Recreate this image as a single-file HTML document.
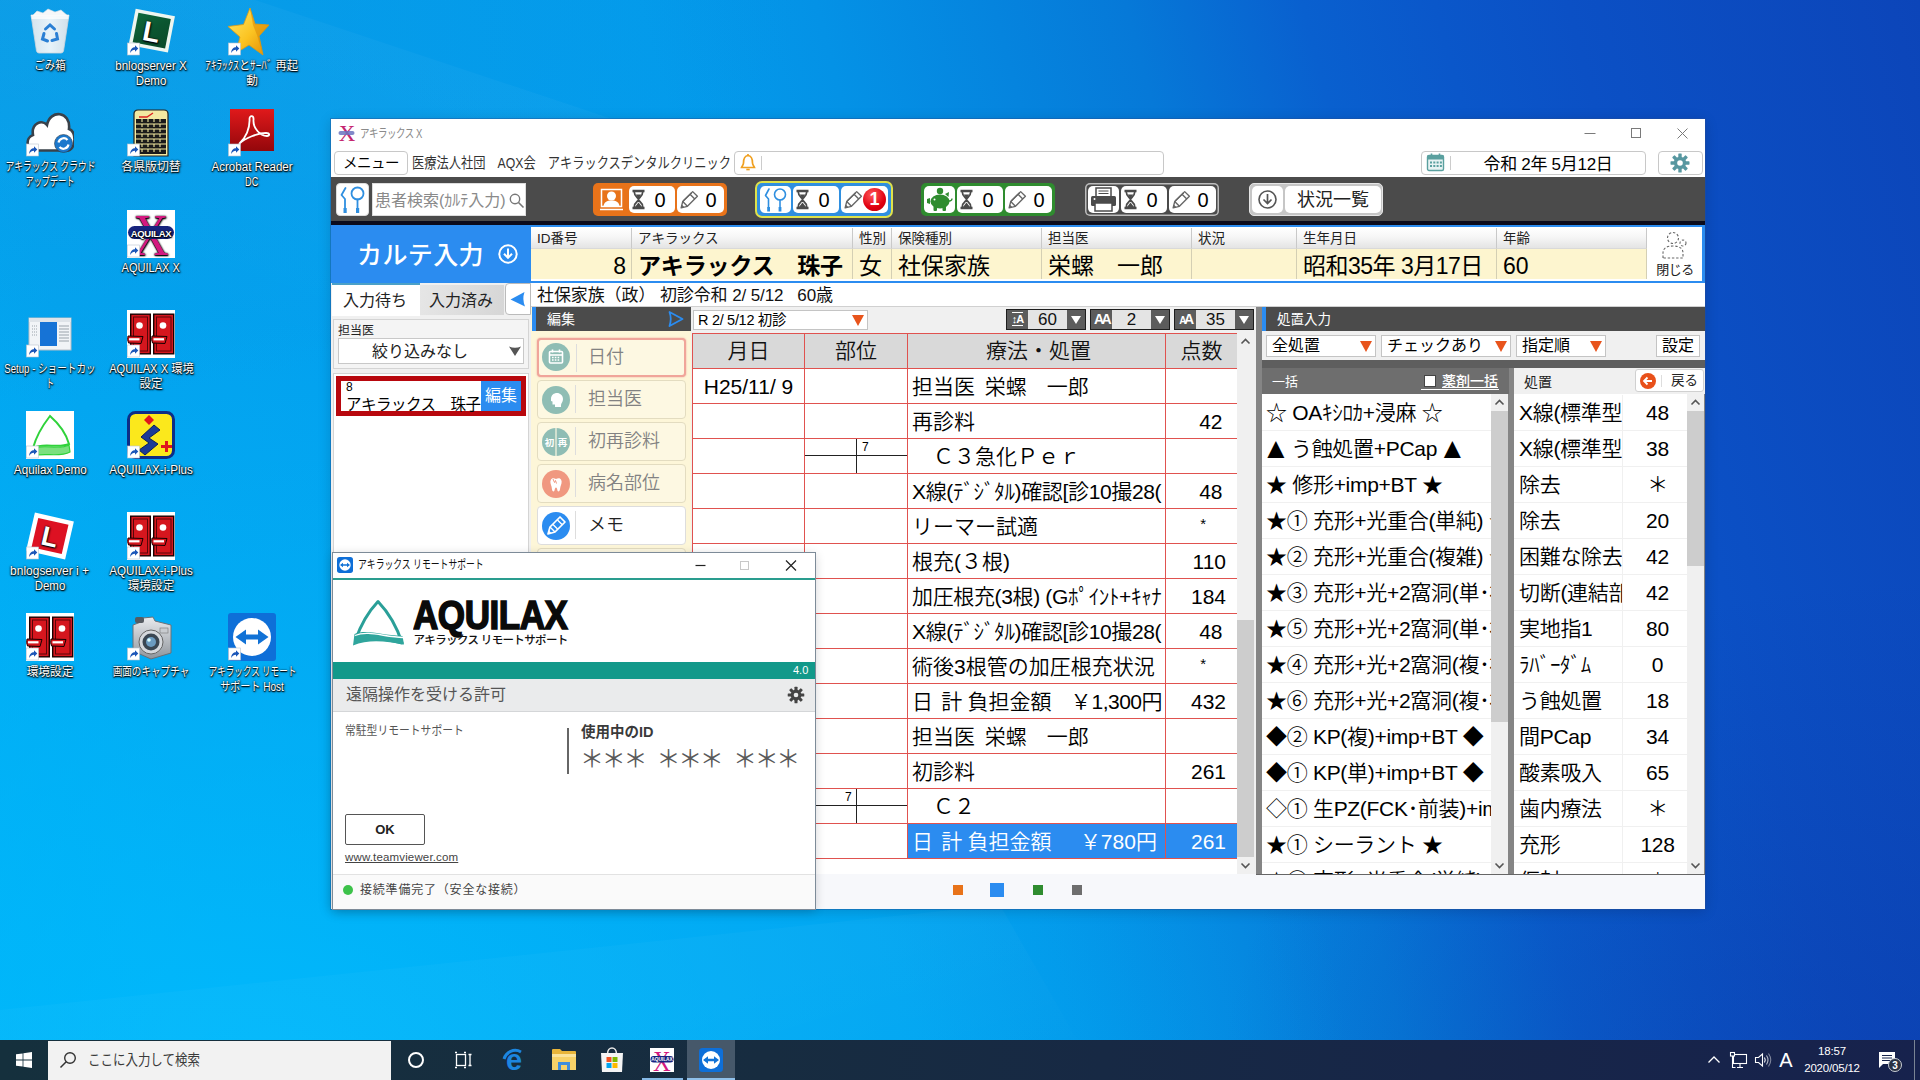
<!DOCTYPE html>
<html lang="ja"><head><meta charset="utf-8"><title>アキラックス X</title>
<style>
*{box-sizing:border-box;margin:0;padding:0}
html,body{width:1920px;height:1080px;overflow:hidden}
body{position:relative;font-family:"Liberation Sans","Noto Sans CJK JP",sans-serif;font-size:14px;color:#000;
background:#0a78d8}
.abs{position:absolute}
.bg{position:absolute;left:0;top:0;width:1920px;height:1080px;
background:linear-gradient(75deg,#00acf3 0%,#03a4ef 12%,#03a0ee 26%,#039cec 42%,#0492e6 50%,#0584de 58%,#0679d8 64%,#0960cf 72%,#0a57ca 78%,#0b50c5 84%,#0c45b9 100%)}
.bg2{position:absolute;left:0;top:0;width:1920px;height:1080px;
background:
 radial-gradient(ellipse 1100px 760px at 250px 1080px,rgba(0,190,255,.8),rgba(0,186,252,.45) 50%,rgba(0,182,250,0) 100%),
 radial-gradient(ellipse 700px 500px at 1920px 1080px,rgba(12,52,160,.45),rgba(12,52,160,0) 100%),
 radial-gradient(ellipse 800px 400px at 0px 0px,rgba(16,140,215,.35),rgba(16,140,215,0) 100%)}
/* desktop icons */
.dicon{position:absolute;width:160px;text-align:center;color:#fff;font-size:12px;line-height:15px;
text-shadow:0 0 2px #000,1px 1px 2px rgba(0,0,0,.9),0 1px 1px rgba(0,0,0,.8)}
.dicon svg{display:block;margin:0 auto 3px auto}
.dicon .lb{display:block;white-space:nowrap;height:15px}
.dicon .nw{display:inline-block;white-space:nowrap;transform-origin:50% 50%}
.dicon{overflow:visible}
</style>
<style>
/* main window */
#mw{position:absolute;left:331px;top:119px;width:1374px;height:790px;background:#fff;box-shadow:0 0 0 1px rgba(40,80,150,.4),0 2px 12px rgba(0,0,20,.18)}
.t{position:absolute;white-space:nowrap;line-height:1}
.nar{display:inline-block;transform-origin:0 50%;white-space:nowrap}
.btn{position:absolute;background:#fff;border:1px solid #c8c8c8;border-radius:4px}
.tbgrp{position:absolute;top:183px;height:33px;width:134px;border-radius:5px}
.tbgrp i{position:absolute;top:3px;height:27px;background:#fff;border-radius:5px;display:block}
.tbgrp b{position:absolute;top:4px;font-weight:normal;font-size:20px;line-height:27px;color:#000;width:20px;text-align:center}
.hl{position:absolute;top:228px;height:20px;background:linear-gradient(#fff,#f6f6f6 45%,#e4e4e4);border-right:1px solid #c9c9c9;font-size:13.500px;line-height:21px;padding-left:6px;color:#222;white-space:nowrap;overflow:hidden}
.hv{position:absolute;top:248px;height:31px;background:#fdf5cf;border-right:1px solid #d4cfb4;border-top:1px solid #d9d9d9;font-size:23px;line-height:35px;padding-left:6px;white-space:nowrap;overflow:hidden}
.dd{position:absolute;background:#fff;border:1px solid #c4c4c4;font-size:16px;white-space:nowrap}
.dd:after{content:"";position:absolute;right:3px;top:50%;margin-top:-5px;border-left:6px solid transparent;border-right:6px solid transparent;border-top:11px solid #e8541c}
.ebtn{position:absolute;left:537px;width:149px;height:39px;border:1px solid #e3dcc0;border-radius:4px;background:#fdf8e2;font-size:18px;font-weight:350;line-height:37px;color:#828282;padding-left:50px;white-space:nowrap}
.ebtn:before{content:"";position:absolute;left:37px;top:4px;height:28px;border-left:1px solid #ddd}
.ebtn svg{position:absolute;left:4px;top:4.500px}
/* chart table */
.ct{position:absolute;left:692px;top:332.500px;width:545px;height:526px;background:#fff}
.ct .r{position:absolute;left:0;width:545px;height:36px;border-top:1.500px solid #e0524f}
.ct .c{position:absolute;top:0;height:100%;border-left:1.500px solid #e0524f;font-size:21px;font-weight:350;line-height:35px;white-space:pre;overflow:hidden}
.ct .hd .c{background:#d9d9d9;text-align:center;font-size:21px;line-height:34px;color:#111}
.ct .c1{left:0;width:112px;text-align:center}.ct .c2{left:112px;width:103px}.ct .c3{left:215px;width:258px;padding-left:4px}.ct .c4{left:473px;width:72px;text-align:right;padding-right:11px}
.ct .sel .c3,.ct .sel .c4{background:#2b8cf0;color:#fff}
.sb{position:absolute;background:#f0f0f0}
.sb .th{position:absolute;left:0;width:100%;background:#cdcdcd}
.sb svg{position:absolute;left:0}
/* right lists */
.ll{position:absolute;font-size:21px;font-weight:350;line-height:35px;letter-spacing:-.3px;height:36px;white-space:nowrap;overflow:hidden;border-bottom:1px solid #f0f0f0;background:#fff}
.fs{position:absolute;top:309px;height:21px;width:80px;background:#5c5c5c;border:1px solid #1e1e1e}
.fs i{position:absolute;left:21px;top:0;width:39px;height:19px;background:#e4e4e4;font-style:normal;font-size:17px;font-weight:350;line-height:20px;text-align:center;color:#111}
.fs:after{content:"";position:absolute;right:4px;top:6px;border-left:5px solid transparent;border-right:5px solid transparent;border-top:8px solid #fff}
.fs b{position:absolute;left:0;top:0;width:21px;text-align:center;color:#fff;font-size:14px;line-height:19px;letter-spacing:-2.500px;font-weight:bold}
.fs b small{font-size:10px}
.tri{font-size:29px;line-height:0;position:relative;top:2px;margin:0 -4.500px}
</style>
</head><body>
<div class="bg"></div><div class="bg2"></div>
<svg class="abs" style="left:0;top:0" width="1920" height="1080" viewBox="0 0 1920 1080"><defs><linearGradient id="ray1" gradientUnits="userSpaceOnUse" x1="600" y1="115" x2="500" y2="415"><stop offset="0" stop-color="#fff" stop-opacity=".03"/><stop offset="1" stop-color="#fff" stop-opacity="0"/></linearGradient><linearGradient id="ray2" gradientUnits="userSpaceOnUse" x1="700" y1="1000" x2="760" y2="1180"><stop offset="0" stop-color="#fff" stop-opacity=".025"/><stop offset="1" stop-color="#fff" stop-opacity="0"/></linearGradient></defs><path d="M0 0 L255 0 L1100 281.700 L1100 700 L0 700Z" fill="url(#ray1)"/><path d="M0 1080 L0 1010 L1000 905 L1100 1080Z" fill="url(#ray2)"/></svg>
<!-- desktop icons -->
<div class="dicon" style="left:-30px;top:8px"><svg width="48" height="48" viewBox="0 0 48 48" style="margin-bottom:3px"><defs><linearGradient id="bg11" x1="0" y1="0" x2="1" y2="0"><stop offset="0" stop-color="#e4e9ee"/><stop offset=".5" stop-color="#f7f9fb"/><stop offset="1" stop-color="#dfe5ea"/></linearGradient></defs>
<path d="M5 7 L43 7 L37.500 43 Q37 45 35 45 L13 45 Q11 45 10.500 43 Z" fill="url(#bg11)" fill-opacity=".93" stroke="#cfd6dc" stroke-width=".8"/>
<path d="M6 8 l5 -5 l6 2 l5 -4 l7 3 l6 -2 l7 6 z" fill="#f5f7f9" stroke="#d8dee3" stroke-width=".6"/>
<path d="M5 7 L43 7 L42.300 11 L5.700 11Z" fill="#fff" fill-opacity=".7"/>
<g fill="none" stroke="#2a7fd4" stroke-width="3" stroke-linecap="round"><path d="M19.500 21 l4.500 -4 l4.500 4"/><path d="M30.500 25.500 l1 5.500 l-5.500 1.500"/><path d="M21.500 33 l-5 -2 l1.500 -5.500"/></g></svg><span class="lb"><span class="nw" style="transform:scaleX(0.872)">ごみ箱</span></span></div>
<div class="dicon" style="left:71px;top:8px"><svg width="48" height="48" viewBox="0 0 48 48" style="margin-bottom:3px"><defs><linearGradient id="lg12" x1="0" y1="0" x2="1" y2="1"><stop offset="0" stop-color="#0f6a3c"/><stop offset=".5" stop-color="#0b5530"/><stop offset="1" stop-color="#0a4a2a"/></linearGradient></defs>
<g transform="rotate(11 24 24)"><rect x="4.500" y="4" width="40" height="37" fill="#eef6f0"/><rect x="8" y="7.500" width="33" height="30" fill="url(#lg12)"/>
<text x="24.500" y="33.500" font-family="Liberation Sans,sans-serif" font-weight="bold" font-size="28" fill="#fff" text-anchor="middle">L</text></g><g><rect x=".5" y="35" width="12" height="12" fill="#fff" stroke="#b8c4d0" stroke-width=".6"/><path d="M3.200 45 C3.200 41 5.500 39.200 8 39.200 L8 37.300 L11.300 40.500 L8 43.700 L8 41.800 C5.800 41.800 4.500 42.800 3.200 45Z" fill="#1b56b8"/></g></svg><span class="lb"><span class="nw" style="transform:scaleX(0.968)">bnlogserver X</span></span><span class="lb"><span class="nw" style="transform:scaleX(0.959)">Demo</span></span></div>
<div class="dicon" style="left:172px;top:8px"><svg width="48" height="48" viewBox="0 0 48 48" style="margin-bottom:3px"><defs><linearGradient id="sg3" x1="0" y1="0" x2="1" y2="1"><stop offset="0" stop-color="#ffe96a"/><stop offset=".55" stop-color="#fbc321"/><stop offset="1" stop-color="#e08a06"/></linearGradient></defs>
<path d="M22 0 L27 16 L41 17 L31 28 L35 47 L21 37 L8 45 L12 29 L0 18.500 L15.500 16.500 Z" fill="url(#sg3)" stroke="#e09a10" stroke-width=".8"/>
<path d="M22 0 L27 16 L41 17 L31 28 L35 47 L29 27 L25 17Z" fill="#d98a08" fill-opacity=".55"/><g><rect x=".5" y="35" width="12" height="12" fill="#fff" stroke="#b8c4d0" stroke-width=".6"/><path d="M3.200 45 C3.200 41 5.500 39.200 8 39.200 L8 37.300 L11.300 40.500 L8 43.700 L8 41.800 C5.800 41.800 4.500 42.800 3.200 45Z" fill="#1b56b8"/></g></svg><span class="lb"><span class="nw" style="transform:scaleX(0.933)">ｱｷﾗｯｸｽとｻｰﾊﾞ 再起</span></span><span class="lb"><span class="nw" style="transform:scaleX(0.974)">動</span></span></div>
<div class="dicon" style="left:-30px;top:109px"><svg width="48" height="48" viewBox="0 0 48 48" style="margin-bottom:3px"><path d="M10 41.500 C0 41.500 -1 29 7 26 C5 14.500 16 10 21 16 C24 0 45 2 43 20 C51 22 50 41.500 41 41.500 Z" fill="#fff" stroke="#39414a" stroke-width="2.600"/>
<circle cx="37.500" cy="34.500" r="9" fill="#1c78cc" stroke="#2a3a4a" stroke-width=".6"/><path d="M32.500 33.500 a5.200 5.200 0 0 1 9 -2.500 M42.500 35.500 a5.200 5.200 0 0 1 -9 2.500" fill="none" stroke="#fff" stroke-width="2.200"/><g><rect x=".5" y="35" width="12" height="12" fill="#fff" stroke="#b8c4d0" stroke-width=".6"/><path d="M3.200 45 C3.200 41 5.500 39.200 8 39.200 L8 37.300 L11.300 40.500 L8 43.700 L8 41.800 C5.800 41.800 4.500 42.800 3.200 45Z" fill="#1b56b8"/></g></svg><span class="lb"><span class="nw" style="transform:scaleX(0.732)">アキラックス クラウド</span></span><span class="lb"><span class="nw" style="transform:scaleX(0.680)">アップデート</span></span></div>
<div class="dicon" style="left:71px;top:109px"><svg width="48" height="48" viewBox="0 0 48 48" style="margin-bottom:3px"><path d="M7 5 Q7 1 11 1 L37 1 Q41 1 41 5 L41 47 L7 47Z" fill="#f3e9a2" stroke="#222" stroke-width="1.2"/>
<rect x="9" y="10" width="30" height="35" fill="#1a1a1a"/>
<g stroke="#f3e9a2" stroke-width="1.1"><path d="M9 15h30M9 20h30M9 25h30M9 30h30M9 35h30M9 40h30"/><path d="M15 10v35M21 10v35M27 10v35M33 10v35" stroke-dasharray="3 2"/></g>
<path d="M12 8 L20 8 L26 4" stroke="#d22" stroke-width="1.4" fill="none"/><g><rect x=".5" y="35" width="12" height="12" fill="#fff" stroke="#b8c4d0" stroke-width=".6"/><path d="M3.200 45 C3.200 41 5.500 39.200 8 39.200 L8 37.300 L11.300 40.500 L8 43.700 L8 41.800 C5.800 41.800 4.500 42.800 3.200 45Z" fill="#1b56b8"/></g></svg><span class="lb"><span class="nw" style="transform:scaleX(0.988)">各県版切替</span></span></div>
<div class="dicon" style="left:172px;top:109px"><svg width="48" height="48" viewBox="0 0 48 48" style="margin-bottom:3px"><defs><linearGradient id="ag6" x1="0" y1="0" x2="0" y2="1"><stop offset="0" stop-color="#e0191b"/><stop offset="1" stop-color="#93070b"/></linearGradient></defs>
<rect x="2" y="0" width="44" height="42" fill="url(#ag6)"/>
<path transform="translate(0 -3)" d="M11 38 C18 32 22 22 21.500 13 C21.500 9 26 9 25.500 14 C25 22 32 30 39 30 C42 30 42 27 38 27 C30 27 17 32 11 38Z" fill="none" stroke="#fff" stroke-width="1.8"/><g><rect x=".5" y="35" width="12" height="12" fill="#fff" stroke="#b8c4d0" stroke-width=".6"/><path d="M3.200 45 C3.200 41 5.500 39.200 8 39.200 L8 37.300 L11.300 40.500 L8 43.700 L8 41.800 C5.800 41.800 4.500 42.800 3.200 45Z" fill="#1b56b8"/></g></svg><span class="lb"><span class="nw" style="transform:scaleX(0.967)">Acrobat Reader</span></span><span class="lb"><span class="nw" style="transform:scaleX(0.767)">DC</span></span></div>
<div class="dicon" style="left:71px;top:210px"><svg width="48" height="48" viewBox="0 0 48 48" style="margin-bottom:3px"><rect x="0" y="0" width="48" height="48" fill="#fff"/>
<text x="24" y="45" font-family="Liberation Serif,serif" font-size="60" fill="#d3197f" text-anchor="middle" transform="translate(24 0) scale(.82 1) translate(-24 0)">X</text>
<rect x="1" y="16" width="46" height="13" rx="6.500" fill="#17247e"/>
<text x="24" y="26.500" font-family="Liberation Sans,sans-serif" font-weight="bold" font-size="9.500" fill="#fff" text-anchor="middle" letter-spacing="-.3">AQUILAX</text><g><rect x=".5" y="35" width="12" height="12" fill="#fff" stroke="#b8c4d0" stroke-width=".6"/><path d="M3.200 45 C3.200 41 5.500 39.200 8 39.200 L8 37.300 L11.300 40.500 L8 43.700 L8 41.800 C5.800 41.800 4.500 42.800 3.200 45Z" fill="#1b56b8"/></g></svg><span class="lb"><span class="nw" style="transform:scaleX(0.920)">AQUILAX X</span></span></div>
<div class="dicon" style="left:-30px;top:310px"><svg width="48" height="48" viewBox="0 0 48 48" style="margin-bottom:4px"><rect x="3" y="8" width="42" height="32" fill="#f1f4f7" stroke="#b6bec6" stroke-width="1"/>
<rect x="3" y="8" width="42" height="4" fill="#dfe4e9"/>
<rect x="14" y="12" width="17" height="24" fill="#1673d6"/>
<g stroke="#9aa3ab" stroke-width="1"><path d="M33 16h10M33 19h10M33 22h10M33 25h10M33 28h10M33 31h10"/><path d="M6 16h5M6 19h5M6 22h5M6 25h5" stroke-dasharray="1 1"/></g><g><rect x=".5" y="35" width="12" height="12" fill="#fff" stroke="#b8c4d0" stroke-width=".6"/><path d="M3.200 45 C3.200 41 5.500 39.200 8 39.200 L8 37.300 L11.300 40.500 L8 43.700 L8 41.800 C5.800 41.800 4.500 42.800 3.200 45Z" fill="#1b56b8"/></g></svg><span class="lb"><span class="nw" style="transform:scaleX(0.801)">Setup - ショートカッ</span></span><span class="lb"><span class="nw" style="transform:scaleX(0.666)">ト</span></span></div>
<div class="dicon" style="left:71px;top:310px"><svg width="48" height="48" viewBox="0 0 48 48" style="margin-bottom:4px"><rect x="0" y="0" width="48" height="48" fill="#fff"/>
<rect x="3.700" y="4.200" width="19.600" height="39.600" fill="#d5161e" stroke="#1a0000" stroke-width="1.400"/><rect x="26.700" y="4.200" width="20" height="39.600" fill="#d5161e" stroke="#1a0000" stroke-width="1.400"/>
<rect x="6.500" y="7" width="14" height="34" fill="none" stroke="#5a0508" stroke-width="1"/><rect x="29.500" y="7" width="14.500" height="34" fill="none" stroke="#5a0508" stroke-width="1"/>
<circle cx="12.500" cy="15.500" r="3.300" fill="#fff"/><circle cx="36" cy="15.500" r="3.300" fill="#fff"/>
<path d="M1 26 Q0 29.500 1.500 33 L14 33.500 L16 26.500 Z" fill="#d5161e" stroke="#1a0000" stroke-width="1"/><path d="M25 26 Q24 29.500 25.500 33 L38 33.500 L40 26.500 Z" fill="#d5161e" stroke="#1a0000" stroke-width="1"/>
<rect x="2" y="28.200" width="10.500" height="2.200" fill="#fff"/><rect x="26.500" y="28.200" width="10.500" height="2.200" fill="#fff"/><g><rect x=".5" y="35" width="12" height="12" fill="#fff" stroke="#b8c4d0" stroke-width=".6"/><path d="M3.200 45 C3.200 41 5.500 39.200 8 39.200 L8 37.300 L11.300 40.500 L8 43.700 L8 41.800 C5.800 41.800 4.500 42.800 3.200 45Z" fill="#1b56b8"/></g></svg><span class="lb"><span class="nw" style="transform:scaleX(0.931)">AQUILAX X 環境</span></span><span class="lb"><span class="nw" style="transform:scaleX(0.966)">設定</span></span></div>
<div class="dicon" style="left:-30px;top:411px"><svg width="48" height="48" viewBox="0 0 48 48" style="margin-bottom:4px"><rect x="0" y="0" width="48" height="48" fill="#fff"/>
<path d="M24 5 C17 14 10 26 7 37 C18 31 32 38 43 33 C40 22 32 12 24 5Z" fill="none" stroke="#2fd23a" stroke-width="2"/>
<path d="M6 38 C18 32 32 40 43 34 L44 41 C33 47 18 41 7 45Z" fill="#7be07f" stroke="#2fd23a" stroke-width="1.2"/><g><rect x=".5" y="35" width="12" height="12" fill="#fff" stroke="#b8c4d0" stroke-width=".6"/><path d="M3.200 45 C3.200 41 5.500 39.200 8 39.200 L8 37.300 L11.300 40.500 L8 43.700 L8 41.800 C5.800 41.800 4.500 42.800 3.200 45Z" fill="#1b56b8"/></g></svg><span class="lb"><span class="nw" style="transform:scaleX(0.977)">Aquilax Demo</span></span></div>
<div class="dicon" style="left:71px;top:411px"><svg width="48" height="48" viewBox="0 0 48 48" style="margin-bottom:4px"><rect x="1.5" y="1.500" width="45" height="45" rx="7" fill="#fbe81c" stroke="#0d2d86" stroke-width="3"/>
<path d="M27 14 L33 19 L22 27 L31 33 L18 44 L12 39 L22 32 L14 26Z" fill="#1b3a96" stroke="#0a1f5c" stroke-width="1"/>
<path d="M22 4 l5 5 l-5 5 l-5 -5z" fill="#e0161c"/>
<path d="M34 34h4v-4h3v4h4v3h-4v4h-3v-4h-4z" fill="#e0161c"/><g><rect x=".5" y="35" width="12" height="12" fill="#fff" stroke="#b8c4d0" stroke-width=".6"/><path d="M3.200 45 C3.200 41 5.500 39.200 8 39.200 L8 37.300 L11.300 40.500 L8 43.700 L8 41.800 C5.800 41.800 4.500 42.800 3.200 45Z" fill="#1b56b8"/></g></svg><span class="lb"><span class="nw" style="transform:scaleX(0.972)">AQUILAX-i-Plus</span></span></div>
<div class="dicon" style="left:-30px;top:512px"><svg width="48" height="48" viewBox="0 0 48 48" style="margin-bottom:4px"><g transform="rotate(13 24 24)"><rect x="4" y="4.500" width="40" height="39" fill="#fff"/><rect x="8.500" y="9" width="31" height="30" fill="#dd1122"/>
<text x="24" y="34" font-family="Liberation Sans,sans-serif" font-weight="bold" font-size="27" fill="#fff" text-anchor="middle">L</text></g><g><rect x=".5" y="35" width="12" height="12" fill="#fff" stroke="#b8c4d0" stroke-width=".6"/><path d="M3.200 45 C3.200 41 5.500 39.200 8 39.200 L8 37.300 L11.300 40.500 L8 43.700 L8 41.800 C5.800 41.800 4.500 42.800 3.200 45Z" fill="#1b56b8"/></g></svg><span class="lb"><span class="nw" style="transform:scaleX(0.998)">bnlogserver i +</span></span><span class="lb"><span class="nw" style="transform:scaleX(0.959)">Demo</span></span></div>
<div class="dicon" style="left:71px;top:512px"><svg width="48" height="48" viewBox="0 0 48 48" style="margin-bottom:4px"><rect x="0" y="0" width="48" height="48" fill="#fff"/>
<rect x="3.700" y="4.200" width="19.600" height="39.600" fill="#d5161e" stroke="#1a0000" stroke-width="1.400"/><rect x="26.700" y="4.200" width="20" height="39.600" fill="#d5161e" stroke="#1a0000" stroke-width="1.400"/>
<rect x="6.500" y="7" width="14" height="34" fill="none" stroke="#5a0508" stroke-width="1"/><rect x="29.500" y="7" width="14.500" height="34" fill="none" stroke="#5a0508" stroke-width="1"/>
<circle cx="12.500" cy="15.500" r="3.300" fill="#fff"/><circle cx="36" cy="15.500" r="3.300" fill="#fff"/>
<path d="M1 26 Q0 29.500 1.500 33 L14 33.500 L16 26.500 Z" fill="#d5161e" stroke="#1a0000" stroke-width="1"/><path d="M25 26 Q24 29.500 25.500 33 L38 33.500 L40 26.500 Z" fill="#d5161e" stroke="#1a0000" stroke-width="1"/>
<rect x="2" y="28.200" width="10.500" height="2.200" fill="#fff"/><rect x="26.500" y="28.200" width="10.500" height="2.200" fill="#fff"/><g><rect x=".5" y="35" width="12" height="12" fill="#fff" stroke="#b8c4d0" stroke-width=".6"/><path d="M3.200 45 C3.200 41 5.500 39.200 8 39.200 L8 37.300 L11.300 40.500 L8 43.700 L8 41.800 C5.800 41.800 4.500 42.800 3.200 45Z" fill="#1b56b8"/></g></svg><span class="lb"><span class="nw" style="transform:scaleX(0.972)">AQUILAX-i-Plus</span></span><span class="lb"><span class="nw" style="transform:scaleX(0.971)">環境設定</span></span></div>
<div class="dicon" style="left:-30px;top:613px"><svg width="48" height="48" viewBox="0 0 48 48" style="margin-bottom:4px"><rect x="0" y="0" width="48" height="48" fill="#fff"/>
<rect x="3.700" y="4.200" width="19.600" height="39.600" fill="#d5161e" stroke="#1a0000" stroke-width="1.400"/><rect x="26.700" y="4.200" width="20" height="39.600" fill="#d5161e" stroke="#1a0000" stroke-width="1.400"/>
<rect x="6.500" y="7" width="14" height="34" fill="none" stroke="#5a0508" stroke-width="1"/><rect x="29.500" y="7" width="14.500" height="34" fill="none" stroke="#5a0508" stroke-width="1"/>
<circle cx="12.500" cy="15.500" r="3.300" fill="#fff"/><circle cx="36" cy="15.500" r="3.300" fill="#fff"/>
<path d="M1 26 Q0 29.500 1.500 33 L14 33.500 L16 26.500 Z" fill="#d5161e" stroke="#1a0000" stroke-width="1"/><path d="M25 26 Q24 29.500 25.500 33 L38 33.500 L40 26.500 Z" fill="#d5161e" stroke="#1a0000" stroke-width="1"/>
<rect x="2" y="28.200" width="10.500" height="2.200" fill="#fff"/><rect x="26.500" y="28.200" width="10.500" height="2.200" fill="#fff"/><g><rect x=".5" y="35" width="12" height="12" fill="#fff" stroke="#b8c4d0" stroke-width=".6"/><path d="M3.200 45 C3.200 41 5.500 39.200 8 39.200 L8 37.300 L11.300 40.500 L8 43.700 L8 41.800 C5.800 41.800 4.500 42.800 3.200 45Z" fill="#1b56b8"/></g></svg><span class="lb"><span class="nw" style="transform:scaleX(0.971)">環境設定</span></span></div>
<div class="dicon" style="left:71px;top:613px"><svg width="48" height="48" viewBox="0 0 48 48" style="margin-bottom:4px"><defs><linearGradient id="cg15" x1="0" y1="0" x2="0" y2="1"><stop offset="0" stop-color="#e9ebee"/><stop offset="1" stop-color="#8f959c"/></linearGradient></defs>
<path d="M6 12 L14 9 L16 5 L26 4 L28 8 L44 12 L44 40 L24 46 L6 38Z" fill="url(#cg15)" stroke="#6a7076" stroke-width="1"/>
<rect x="8" y="4" width="9" height="6" rx="2" fill="#555b62"/>
<circle cx="24" cy="29" r="12" fill="#d5d8dc" stroke="#666" stroke-width="1"/><circle cx="24" cy="29" r="8.500" fill="#3a4652"/><circle cx="24" cy="29" r="5" fill="#6b9bc0"/><circle cx="22" cy="27" r="1.800" fill="#dff"/>
<rect x="33" y="15" width="8" height="5" fill="#c8ccd0" stroke="#777" stroke-width=".6"/><g><rect x=".5" y="35" width="12" height="12" fill="#fff" stroke="#b8c4d0" stroke-width=".6"/><path d="M3.200 45 C3.200 41 5.500 39.200 8 39.200 L8 37.300 L11.300 40.500 L8 43.700 L8 41.800 C5.800 41.800 4.500 42.800 3.200 45Z" fill="#1b56b8"/></g></svg><span class="lb"><span class="nw" style="transform:scaleX(0.799)">画面のキャプチャ</span></span></div>
<div class="dicon" style="left:172px;top:613px"><svg width="48" height="48" viewBox="0 0 48 48" style="margin-bottom:4px"><rect x="0" y="0" width="48" height="48" rx="3" fill="#0e6fd8"/>
<circle cx="24" cy="24" r="19" fill="#fff"/>
<path d="M7.500 24 L18 16.500 L18 21.500 L30 21.500 L30 16.500 L40.500 24 L30 31.500 L30 26.500 L18 26.500 L18 31.500Z" fill="#1172d6"/><g><rect x=".5" y="35" width="12" height="12" fill="#fff" stroke="#b8c4d0" stroke-width=".6"/><path d="M3.200 45 C3.200 41 5.500 39.200 8 39.200 L8 37.300 L11.300 40.500 L8 43.700 L8 41.800 C5.800 41.800 4.500 42.800 3.200 45Z" fill="#1b56b8"/></g></svg><span class="lb"><span class="nw" style="transform:scaleX(0.711)">アキラックス リモート</span></span><span class="lb"><span class="nw" style="transform:scaleX(0.838)">サポート Host</span></span></div>
<!-- main window -->
<div id="mw"></div>
<!-- title bar -->
<svg class="abs" style="left:337px;top:123px" width="20" height="20" viewBox="0 0 20 20"><text x="10" y="18" text-anchor="middle" font-family="Liberation Serif,serif" font-size="23" fill="#c4266f">X</text><rect x="1.500" y="8" width="16" height="4" rx="2" fill="#6b74c0" fill-opacity=".85"/></svg>
<div class="t" style="left:360px;top:128px;font-size:12px;color:#8a8a8a;letter-spacing:-.6px"><span class="nar" style="transform:scaleX(.79)">アキラックス X</span></div>
<svg class="abs" style="left:1570px;top:120px" width="134" height="30" viewBox="0 0 134 30"><g stroke="#7a7a7a" stroke-width="1" fill="none"><path d="M14.500 13.500h11"/><rect x="61.500" y="8.500" width="9" height="9"/><path d="M107.500 8.500l10 10M117.500 8.500l-10 10"/></g></svg>
<!-- menu row -->
<div class="btn" style="left:334px;top:151px;width:74px;height:24px;font-size:14.500px;line-height:22px;text-align:center;letter-spacing:-.5px">メニュー</div>
<div class="t" style="left:412px;top:155px;font-size:15px;color:#333"><span class="nar" style="transform:scaleX(.815)">医療法人社団　AQX会　アキラックスデンタルクリニック</span></div>
<div class="btn" style="left:734px;top:151px;width:430px;height:24px"></div>
<svg class="abs" style="left:738px;top:152px" width="26" height="22" viewBox="0 0 26 22"><path d="M10 3.500 C5.500 4 5.500 8.500 5.500 11 C5.500 13 4 14 3.500 15.500 L16.500 15.500 C16 14 14.500 13 14.500 11 C14.500 8.500 14.500 4 10 3.500Z" fill="none" stroke="#f0a020" stroke-width="1.700"/><path d="M8.300 17.500h3.400" stroke="#f0a020" stroke-width="1.700"/><path d="M10 3.500v-1.500" stroke="#f0a020" stroke-width="1.700"/><path d="M23.500 4v14" stroke="#ccc" stroke-width="1"/></svg>
<div class="btn" style="left:1421px;top:151px;width:225px;height:24px"></div>
<svg class="abs" style="left:1426px;top:152px" width="28" height="22" viewBox="0 0 28 22"><rect x="1.500" y="3.500" width="16" height="15" rx="1.500" fill="#e8f3f3" stroke="#5aa09f" stroke-width="1.400"/><rect x="1.500" y="3.500" width="16" height="4" fill="#5aa09f"/><path d="M5.500 1.500v3.500M13.500 1.500v3.500" stroke="#5aa09f" stroke-width="1.600"/><g fill="#5aa09f"><rect x="4" y="9.500" width="2" height="2"/><rect x="7.300" y="9.500" width="2" height="2"/><rect x="10.600" y="9.500" width="2" height="2"/><rect x="13.900" y="9.500" width="2" height="2"/><rect x="4" y="13" width="2" height="2"/><rect x="7.300" y="13" width="2" height="2"/><rect x="10.600" y="13" width="2" height="2"/><rect x="13.900" y="13" width="2" height="2"/></g><path d="M24.500 4v14" stroke="#ccc" stroke-width="1"/></svg>
<div class="t" style="left:1452px;top:155.500px;width:192px;text-align:center;font-size:17px;letter-spacing:-.3px">令和 2年 5月12日</div>
<div class="btn" style="left:1658px;top:151px;width:45px;height:24px"></div>
<svg class="abs" style="left:1670px;top:153px" width="20" height="20" viewBox="0 0 20 20"><g fill="#5797a0"><circle cx="10" cy="10" r="6.200"/><g id="gt"><rect x="8.300" y=".5" width="3.400" height="4" rx=".6"/><rect x="8.300" y="15.500" width="3.400" height="4" rx=".6"/></g><use href="#gt" transform="rotate(45 10 10)"/><use href="#gt" transform="rotate(90 10 10)"/><use href="#gt" transform="rotate(135 10 10)"/></g><circle cx="10" cy="10" r="2.800" fill="#fff"/></svg>
<!-- toolbar -->
<div class="abs" style="left:331px;top:177px;width:1374px;height:45px;background:#4b4b4b"></div>
<div class="abs" style="left:331px;top:221px;width:1374px;height:4px;background:#0b0b1c"></div>
<div class="abs" style="left:336px;top:183px;width:33px;height:33px;background:#fff;border-radius:4px;border:1px solid #ddd"></div>
<svg class="abs" style="left:337px;top:184px" width="31" height="31" viewBox="0 0 31 31"><g fill="none" stroke="#2f8fe0" stroke-width="1.800" stroke-linecap="round" stroke-linejoin="round"><path d="M8.500 4 L4.500 11 L8 15 L8 25"/><circle cx="20.500" cy="9.500" r="6"/><path d="M20.500 15.500V25"/></g><rect x="6.500" y="24" width="3.200" height="5" fill="#2f8fe0"/><rect x="19" y="24" width="3.200" height="5" fill="#2f8fe0"/></svg>
<div class="abs" style="left:372px;top:183px;width:154px;height:33px;background:#fff;border:1px solid #ddd"></div>
<div class="t" style="left:375px;top:192.500px;font-size:16px;color:#8a8a8a"><span class="nar" style="transform:scaleX(1)">患者検索(ｶﾙﾃ入力)</span></div>
<svg class="abs" style="left:507.500px;top:192px" width="18" height="18" viewBox="0 0 18 18"><circle cx="7" cy="7" r="4.700" fill="none" stroke="#777" stroke-width="1.400"/><path d="M10.500 10.500l5 5" stroke="#777" stroke-width="1.600"/></svg>
<!-- toolbar groups -->
<div class="tbgrp" style="left:593px;background:#e8731a;"><i style="left:3px;width:31px;background:#e8731a"></i><i style="left:36px;width:46px"></i><i style="left:84px;width:47px"></i><svg class="abs" style="left:4px;top:3px" width="29" height="27" viewBox="0 0 29 27"><rect x="1" y="1" width="27" height="25" rx="3" fill="#e8731a"/><rect x="4.500" y="3.500" width="20" height="17" fill="none" stroke="#fff" stroke-width="1.500"/><circle cx="14.500" cy="10" r="4.500" fill="#fff"/><path d="M6.500 21c0-5 3.500-6.500 8-6.500s8 1.500 8 6.500z" fill="#fff"/><path d="M3 23.500h23" stroke="#fff" stroke-width="1.500"/></svg><svg class="abs" style="left:38px;top:6px" width="15" height="21" viewBox="0 0 15 20"><g fill="none" stroke="#4a4a4a" stroke-width="1.700"><path d="M1.500 1.500h12M1.500 18.500h12" stroke-width="2.400"/><path d="M3.300 2.500c0 5 4.200 5.500 4.200 7.500s-4.200 2.500-4.200 7.500M11.700 2.500c0 5-4.200 5.500-4.200 7.500s4.200 2.500 4.200 7.500"/></g><path d="M4 17.500l3.500-4.500 3.500 4.500z" fill="#4a4a4a"/><path d="M4.500 5h6l-3 4z" fill="#4a4a4a"/></svg><b style="left:57px">0</b><svg class="abs" style="left:86px;top:6px" width="20" height="21" viewBox="0 0 19 20"><g fill="none" stroke="#666" stroke-width="1.300" stroke-linejoin="round"><path d="M2 18l1.500-6L13 2.500l4.500 4.500L8 16.500z"/><path d="M3.500 12l4.500 4.500M10.500 5l4.500 4.500M12 3.500l-8 8"/></g><path d="M2 18l.8-3 2.200 2.200z" fill="#666"/></svg><b style="left:108px">0</b></div>
<div class="tbgrp" style="left:757px;background:#2f8fe0;box-shadow:0 0 0 2px #dfe24a"><i style="left:3px;width:31px;background:#fff"></i><i style="left:36px;width:46px"></i><i style="left:84px;width:47px"></i><svg class="abs" style="left:4px;top:3px" width="29" height="27" viewBox="0 0 29 27"><g fill="none" stroke="#2f8fe0" stroke-width="1.600" stroke-linecap="round" stroke-linejoin="round"><path d="M8 3 L4.500 9.500 L7.500 13 L7.500 22"/><circle cx="19" cy="8.500" r="5.500"/><path d="M19 14V22"/></g><rect x="6.200" y="21" width="2.800" height="4.500" fill="#2f8fe0"/><rect x="17.600" y="21" width="2.800" height="4.500" fill="#2f8fe0"/></svg><svg class="abs" style="left:38px;top:6px" width="15" height="21" viewBox="0 0 15 20"><g fill="none" stroke="#4a4a4a" stroke-width="1.700"><path d="M1.500 1.500h12M1.500 18.500h12" stroke-width="2.400"/><path d="M3.300 2.500c0 5 4.200 5.500 4.200 7.500s-4.200 2.500-4.200 7.500M11.700 2.500c0 5-4.200 5.500-4.200 7.500s4.200 2.500 4.200 7.500"/></g><path d="M4 17.500l3.500-4.500 3.500 4.500z" fill="#4a4a4a"/><path d="M4.500 5h6l-3 4z" fill="#4a4a4a"/></svg><b style="left:57px">0</b><svg class="abs" style="left:86px;top:6px" width="20" height="21" viewBox="0 0 19 20"><g fill="none" stroke="#666" stroke-width="1.300" stroke-linejoin="round"><path d="M2 18l1.500-6L13 2.500l4.500 4.500L8 16.500z"/><path d="M3.500 12l4.500 4.500M10.500 5l4.500 4.500M12 3.500l-8 8"/></g><path d="M2 18l.8-3 2.200 2.200z" fill="#666"/></svg><span class="abs" style="left:106px;top:5px;width:23px;height:23px;border-radius:50%;background:radial-gradient(circle at 40% 30%,#ff5a5a,#e00010 60%,#b8000c);color:#fff;font-weight:bold;font-size:18px;line-height:23px;text-align:center">1</span></div>
<div class="tbgrp" style="left:921px;background:#2f8c2f;"><i style="left:3px;width:31px;background:#fff"></i><i style="left:36px;width:46px"></i><i style="left:84px;width:47px"></i><svg class="abs" style="left:4px;top:3px" width="29" height="27" viewBox="0 0 29 27"><g fill="#2f8c2f"><ellipse cx="15" cy="15.500" rx="9.500" ry="7"/><circle cx="15" cy="5" r="3.200"/><path d="M5 12l-3 1v4l3 1z"/><rect x="8.500" y="20" width="3.500" height="5" rx="1"/><rect x="17.500" y="20" width="3.500" height="5" rx="1"/><path d="M20 8l4-2-.5 5z"/><path d="M24 15c2 0 3-1 3-2.500" fill="none" stroke="#2f8c2f" stroke-width="1.300"/></g><circle cx="9.500" cy="13.500" r="1" fill="#fff"/></svg><svg class="abs" style="left:38px;top:6px" width="15" height="21" viewBox="0 0 15 20"><g fill="none" stroke="#4a4a4a" stroke-width="1.700"><path d="M1.500 1.500h12M1.500 18.500h12" stroke-width="2.400"/><path d="M3.300 2.500c0 5 4.200 5.500 4.200 7.500s-4.200 2.500-4.200 7.500M11.700 2.500c0 5-4.200 5.500-4.200 7.500s4.200 2.500 4.200 7.500"/></g><path d="M4 17.500l3.500-4.500 3.500 4.500z" fill="#4a4a4a"/><path d="M4.500 5h6l-3 4z" fill="#4a4a4a"/></svg><b style="left:57px">0</b><svg class="abs" style="left:86px;top:6px" width="20" height="21" viewBox="0 0 19 20"><g fill="none" stroke="#666" stroke-width="1.300" stroke-linejoin="round"><path d="M2 18l1.500-6L13 2.500l4.500 4.500L8 16.500z"/><path d="M3.500 12l4.500 4.500M10.500 5l4.500 4.500M12 3.500l-8 8"/></g><path d="M2 18l.8-3 2.200 2.200z" fill="#666"/></svg><b style="left:108px">0</b></div>
<div class="tbgrp" style="left:1085px;background:#4b4b4b;box-shadow:inset 0 0 0 1.500px #bdbdbd"><i style="left:3px;width:31px;background:#fff"></i><i style="left:36px;width:46px"></i><i style="left:84px;width:47px"></i><svg class="abs" style="left:4px;top:3px" width="29" height="27" viewBox="0 0 29 27"><g fill="#4b4b4b"><rect x="7" y="2" width="15" height="9" fill="#fff" stroke="#4b4b4b" stroke-width="1.500"/><path d="M9.500 5h10M9.500 7.500h10" stroke="#4b4b4b" stroke-width="1"/><rect x="2" y="10" width="25" height="10" rx="1.500"/><rect x="6" y="17" width="17" height="8" fill="#fff" stroke="#4b4b4b" stroke-width="1.500"/></g><circle cx="5.500" cy="13" r="1" fill="#fff"/></svg><svg class="abs" style="left:38px;top:6px" width="15" height="21" viewBox="0 0 15 20"><g fill="none" stroke="#4a4a4a" stroke-width="1.700"><path d="M1.500 1.500h12M1.500 18.500h12" stroke-width="2.400"/><path d="M3.300 2.500c0 5 4.200 5.500 4.200 7.500s-4.200 2.500-4.200 7.500M11.700 2.500c0 5-4.200 5.500-4.200 7.500s4.200 2.500 4.200 7.500"/></g><path d="M4 17.500l3.500-4.500 3.500 4.500z" fill="#4a4a4a"/><path d="M4.500 5h6l-3 4z" fill="#4a4a4a"/></svg><b style="left:57px">0</b><svg class="abs" style="left:86px;top:6px" width="20" height="21" viewBox="0 0 19 20"><g fill="none" stroke="#666" stroke-width="1.300" stroke-linejoin="round"><path d="M2 18l1.500-6L13 2.500l4.500 4.500L8 16.500z"/><path d="M3.500 12l4.500 4.500M10.500 5l4.500 4.500M12 3.500l-8 8"/></g><path d="M2 18l.8-3 2.200 2.200z" fill="#666"/></svg><b style="left:108px">0</b></div>
<div class="tbgrp" style="left:1249px;background:#c6c6c6;border:1px solid #e6e6e6"><i style="left:2px;top:2px;width:31px"></i><i style="left:35px;top:2px;width:96px;font-style:normal;font-size:18px;line-height:29px;text-align:center;color:#222">状況一覧</i><svg class="abs" style="left:7px;top:5px" width="21" height="21" viewBox="0 0 21 21"><circle cx="10.500" cy="10.500" r="8.500" fill="none" stroke="#555" stroke-width="1.600"/><path d="M10.500 5v9M6.500 10.500l4 4 4-4" fill="none" stroke="#555" stroke-width="1.700"/></svg></div>
<!-- patient header -->
<div class="abs" style="left:331px;top:225px;width:1374px;height:58px;background:#2b8cf0"></div>
<div class="t" style="left:357px;top:243px;font-size:25px;font-weight:500;color:#fff;letter-spacing:.4px">カルテ入力</div>
<svg class="abs" style="left:497px;top:243px" width="22" height="22" viewBox="0 0 22 22"><circle cx="11" cy="11" r="8.700" fill="none" stroke="#fff" stroke-width="2"/><path d="M11 5.500v9M7 10.800l4 4 4-4" fill="none" stroke="#fff" stroke-width="2"/></svg>
<div class="abs" style="left:531px;top:227px;width:1171px;height:54px;background:#fff"></div>
<div class="hl" style="left:531px;width:101px">ID番号</div><div class="hv" style="left:531px;width:101px;text-align:right;padding-right:5px">8</div>
<div class="hl" style="left:632px;width:221px">アキラックス</div><div class="hv" style="left:632px;width:221px;font-weight:bold;font-size:23px;letter-spacing:-.15px">アキラックス　珠子</div>
<div class="hl" style="left:853px;width:39px">性別</div><div class="hv" style="left:853px;width:39px">女</div>
<div class="hl" style="left:892px;width:150px">保険種別</div><div class="hv" style="left:892px;width:150px">社保家族</div>
<div class="hl" style="left:1042px;width:150px">担当医</div><div class="hv" style="left:1042px;width:150px">栄螺　一郎</div>
<div class="hl" style="left:1192px;width:105px">状況</div><div class="hv" style="left:1192px;width:105px"></div>
<div class="hl" style="left:1297px;width:200px">生年月日</div><div class="hv" style="left:1297px;width:200px;letter-spacing:-.5px">昭和35年 3月17日</div>
<div class="hl" style="left:1497px;width:150px">年齢</div><div class="hv" style="left:1497px;width:150px">60</div>
<div class="abs" style="left:1649px;top:228px;width:51px;height:51px;background:#fff"></div>
<svg class="abs" style="left:1657px;top:230px" width="36" height="32" viewBox="0 0 36 32"><g fill="none" stroke="#666" stroke-width="1.100" stroke-dasharray="2.400 1.800"><circle cx="16" cy="8" r="5.500"/><path d="M6 28v-5c0-5 4-7 10-7s10 2 10 7v5z"/><circle cx="26" cy="13" r="3"/></g></svg>
<div class="t" style="left:1654px;top:263px;width:42px;text-align:center;font-size:13px;color:#222;letter-spacing:-.5px">閉じる</div>
<!-- insurance line -->
<div class="abs" style="left:531px;top:283px;width:1174px;height:24px;background:#fff;border-bottom:1px solid #d0d0d0"></div>
<div class="t" style="left:537px;top:286.500px;font-size:17px;color:#111;letter-spacing:-.1px;white-space:pre">社保家族（政） 初診令和 2/ 5/12   60歳</div>
<!-- left panel -->
<div class="abs" style="left:331px;top:283px;width:200px;height:626px;background:#f0f0f0"></div>
<div class="abs" style="left:332px;top:283px;width:88px;height:33px;background:#fff;border-top:2px solid #4aa0c8"></div>
<div class="abs" style="left:420px;top:285px;width:84px;height:30px;background:linear-gradient(100deg,#e6e6e6,#d6d6d6)"></div>
<div class="t" style="left:343px;top:293px;font-size:16px;color:#222">入力待ち</div>
<div class="t" style="left:429px;top:293px;font-size:16px;color:#222">入力済み</div>
<div class="abs" style="left:505px;top:283px;width:26px;height:32px;background:#fff;border:1px solid #bbb;border-radius:4px 0 0 4px"></div>
<svg class="abs" style="left:509px;top:289px" width="18" height="20" viewBox="0 0 18 20"><path d="M1.500 10.500 L15.500 3 Q13 10 16 17.500Z" fill="#2b8cf0"/></svg>
<div class="abs" style="left:333px;top:319px;width:196px;height:50px;background:#f4f4f4;border:1px solid #d4d4d4"></div>
<div class="t" style="left:338px;top:325px;font-size:12px;color:#222">担当医</div>
<div class="abs" style="left:338px;top:338px;width:186px;height:26px;background:#fff;border:1px solid #c8c8c8"></div>
<div class="t" style="left:372px;top:344px;font-size:16px;color:#222">絞り込みなし</div>
<svg class="abs" style="left:508px;top:345px" width="14" height="12" viewBox="0 0 14 12"><path d="M1 1.500 Q7 4 13 1.500 L7 11Z" fill="#555"/></svg>
<div class="abs" style="left:333px;top:373px;width:196px;height:536px;background:#fff;border:1px solid #d4d4d4"></div>
<div class="abs" style="left:336px;top:376px;width:190px;height:40px;background:#fff;border:5px solid #b8080e"></div>
<div class="t" style="left:346px;top:381px;font-size:12px">8</div>
<div class="t" style="left:346px;top:397px;font-size:15.500px;letter-spacing:-.5px">アキラックス　珠子</div>
<div class="abs" style="left:481px;top:381px;width:40px;height:30px;background:#2b8cf0;color:#fff;font-size:16px;line-height:29px;text-align:center">編集</div>
<!-- edit column -->
<div class="abs" style="left:531px;top:307px;width:160px;height:602px;background:#fdf6d8"></div>
<div class="abs" style="left:532px;top:307px;width:159px;height:24px;background:#4b4b4b;border-left:4px solid #2b8cf0"></div>
<div class="t" style="left:547px;top:312px;font-size:14px;color:#fff">編集</div>
<svg class="abs" style="left:667px;top:310px" width="18" height="18" viewBox="0 0 18 18"><path d="M2.500 2 L15.500 9 L2.500 16 Q5 9 2.500 2Z" fill="none" stroke="#2b8cf0" stroke-width="1.800" stroke-linejoin="round"/></svg>
<div class="ebtn" style="top:338px;border:2px solid #f0a59a;box-shadow:0 0 2px #f0a59a;line-height:35px;padding-left:49px"><svg style="left:3px;top:3px" width="28" height="28" viewBox="0 0 28 28"><circle cx="14" cy="14" r="14" fill="#8fbdb4"/><rect x="7.500" y="8.500" width="13" height="11.500" rx="1" fill="none" stroke="#fff" stroke-width="1.600"/><path d="M7.500 12h13" stroke="#fff" stroke-width="1.600"/><path d="M10.500 6.500v3M17.500 6.500v3" stroke="#fff" stroke-width="1.600"/><path d="M10 14.500h8M10 17h8" stroke="#fff" stroke-width="1.400" stroke-dasharray="1.600 1.200"/></svg>日付</div>
<div class="ebtn" style="top:380px"><svg width="28" height="28" viewBox="0 0 28 28"><circle cx="14" cy="14" r="14" fill="#8fbdb4"/><path d="M9 13c0-4 3-6 6-6s6 2.500 6 6c0 3-2 4-2 6v2h-6v-2.500h-2.500v-3l-1.500-.5z" fill="#fff"/></svg>担当医</div>
<div class="ebtn" style="top:422px"><svg width="28" height="28" viewBox="0 0 28 28"><circle cx="14" cy="14" r="14" fill="#8fbdb4"/><path d="M14 0v28" stroke="#fdf8e2" stroke-width="1.200"/><text x="7.500" y="17.500" text-anchor="middle" font-family="Liberation Sans,Noto Sans CJK JP,sans-serif" font-weight="bold" font-size="9.500" fill="#fff">初</text><text x="20.500" y="17.500" text-anchor="middle" font-family="Liberation Sans,Noto Sans CJK JP,sans-serif" font-weight="bold" font-size="9.500" fill="#fff">再</text></svg>初再診料</div>
<div class="ebtn" style="top:464px"><svg width="28" height="28" viewBox="0 0 28 28"><circle cx="14" cy="14" r="14" fill="#f09880"/><path d="M9 9.500c1.500-2 3.500-1 5-.5c1.500-.5 3.500-1.500 5 .5c1.500 2.500 0 5-.5 7s-.5 5-2 5s-1-4-2.500-4s-1 4-2.500 4s-1.500-3-2-5s-2-4.500-.5-7z" fill="#fff"/><path d="M11 9l1.500 3.500 1-2 1 3" fill="none" stroke="#f09880" stroke-width="1"/></svg>病名部位</div>
<div class="ebtn" style="top:506px;background:#fff;color:#222;border-color:#ddd"><svg width="28" height="28" viewBox="0 0 28 28"><circle cx="14" cy="14" r="14" fill="#2b8cf0"/><path d="M6 22l2-7 10-10 5 5-10 10z" fill="none" stroke="#fff" stroke-width="1.700" stroke-linejoin="round"/><path d="M8 15l5 5M11 12.500l4.500 4.500M15.500 8l4.500 4.500" stroke="#fff" stroke-width="1.400"/><path d="M6 22l1-3.500 2.500 2.500z" fill="#fff"/></svg>メモ</div>
<div class="ebtn" style="top:548px;height:10px"></div>
<!-- chart area -->
<div class="abs" style="left:691px;top:307px;width:565px;height:567px;background:#f0f0f0"></div>
<div class="abs" style="left:531px;top:874px;width:1174px;height:35px;background:#f7f8fb"></div>
<div class="dd" style="left:693px;top:310px;width:175px;height:20px;line-height:18px;padding-left:4px;font-size:14.500px;letter-spacing:-.3px">R 2/ 5/12 初診</div>
<div class="fs" style="left:1006px"><b style="font-size:11px;letter-spacing:-1px"><span style="border-top:1.500px solid #fff;border-bottom:1.500px solid #fff">↕A</span></b><i>60</i></div>
<div class="fs" style="left:1090px"><b>AA</b><i>2</i></div>
<div class="fs" style="left:1174px"><b><small>A</small>A</b><i>35</i></div>
<div class="ct">
<div class="r hd" style="top:0;height:36px"><div class="c c1">月日</div><div class="c c2" style="text-align:center">部位</div><div class="c c3" style="text-align:center">療法・処置</div><div class="c c4" style="text-align:center;padding-right:0">点数</div></div>
<div class="r" style="top:35px"><div class="c c1">H25/11/ 9</div><div class="c c2"></div><div class="c c3">担当医<span style="display:inline-block;width:9.8px"></span>栄螺<span style="display:inline-block;width:20px"></span>一郎</div><div class="c c4"></div></div>
<div class="r" style="top:70px"><div class="c c1"></div><div class="c c2"></div><div class="c c3">再診料</div><div class="c c4" style="padding-right:14.500px">42</div></div>
<div class="r" style="top:105px"><div class="c c1"></div><div class="c c2"><span class="abs" style="left:0;top:16px;width:103px;border-top:1.500px solid #222"></span><span class="abs" style="left:51px;top:0;height:34px;border-left:1.500px solid #222"></span><span class="abs" style="left:57px;top:2px;font-size:12px;line-height:12px">7</span></div><div class="c c3">　Ｃ３急化Ｐｅｒ</div><div class="c c4"></div></div>
<div class="r" style="top:140px"><div class="c c1"></div><div class="c c2"></div><div class="c c3"><span style="letter-spacing:-0.35px">X線(ﾃﾞｼﾞﾀﾙ)確認[診10撮28(</span></div><div class="c c4" style="padding-right:14.500px">48</div></div>
<div class="r" style="top:175px"><div class="c c1"></div><div class="c c2"></div><div class="c c3">リーマー試適</div><div class="c c4"><span style="font-size:15px;position:relative;top:-5px;padding-right:20px">*</span></div></div>
<div class="r" style="top:210px"><div class="c c1"></div><div class="c c2"></div><div class="c c3">根充(３根)</div><div class="c c4">110</div></div>
<div class="r" style="top:245px"><div class="c c1"></div><div class="c c2"></div><div class="c c3"><span style="letter-spacing:-0.35px">加圧根充(3根) (Gﾎﾟｲﾝﾄ+ｷｬﾅ</span></div><div class="c c4">184</div></div>
<div class="r" style="top:280px"><div class="c c1"></div><div class="c c2"></div><div class="c c3"><span style="letter-spacing:-0.35px">X線(ﾃﾞｼﾞﾀﾙ)確認[診10撮28(</span></div><div class="c c4" style="padding-right:14.500px">48</div></div>
<div class="r" style="top:315px"><div class="c c1"></div><div class="c c2"></div><div class="c c3">術後3根管の加圧根充状況</div><div class="c c4"><span style="font-size:15px;position:relative;top:-5px;padding-right:20px">*</span></div></div>
<div class="r" style="top:350px"><div class="c c1"></div><div class="c c2"></div><div class="c c3">日<span style="display:inline-block;width:8.3px"></span>計<span style="display:inline-block;width:5.2px"></span>負担金額<span style="display:inline-block;width:19px"></span>￥<span style="letter-spacing:-0.5px">1,300</span>円</div><div class="c c4">432</div></div>
<div class="r" style="top:385px"><div class="c c1"></div><div class="c c2"></div><div class="c c3">担当医<span style="display:inline-block;width:9.8px"></span>栄螺<span style="display:inline-block;width:20px"></span>一郎</div><div class="c c4"></div></div>
<div class="r" style="top:420px"><div class="c c1"></div><div class="c c2"></div><div class="c c3">初診料</div><div class="c c4">261</div></div>
<div class="r" style="top:455px"><div class="c c1"></div><div class="c c2"><span class="abs" style="left:0;top:16px;width:103px;border-top:1.500px solid #222"></span><span class="abs" style="left:51px;top:0;height:34px;border-left:1.500px solid #222"></span><span class="abs" style="left:40px;top:2px;font-size:12px;line-height:12px">7</span></div><div class="c c3">　Ｃ２</div><div class="c c4"></div></div>
<div class="r sel" style="top:490px"><div class="c c1"></div><div class="c c2"></div><div class="c c3">日<span style="display:inline-block;width:8.3px"></span>計<span style="display:inline-block;width:5.2px"></span>負担金額<span style="display:inline-block;width:28.4px"></span>￥780円</div><div class="c c4">261</div></div>
<div class="r" style="top:525px;height:1px"></div>
</div>
<div class="sb" style="left:1237px;top:333px;width:17px;height:541px"><svg style="top:0" width="17" height="17" viewBox="0 0 17 17"><path d="M4.500 10.500l4-4 4 4" fill="none" stroke="#555" stroke-width="1.600"/></svg><div class="th" style="top:287px;height:237px"></div><svg style="bottom:0" width="17" height="17" viewBox="0 0 17 17"><path d="M4.500 6.500l4 4 4-4" fill="none" stroke="#555" stroke-width="1.600"/></svg></div>
<div class="abs" style="left:692px;top:859px;width:545px;height:15px;background:#fff"></div>
<div class="abs" style="left:953px;top:885px;width:10px;height:10px;background:#e8731a"></div>
<div class="abs" style="left:990px;top:883px;width:14px;height:14px;background:#2b8cf0"></div>
<div class="abs" style="left:1033px;top:885px;width:10px;height:10px;background:#2f8c2f"></div>
<div class="abs" style="left:1072px;top:885px;width:10px;height:10px;background:#6e6e6e"></div>
<!-- right panel -->
<div class="abs" style="left:1256px;top:307px;width:449px;height:567px;background:#858585"></div>
<div class="abs" style="left:1256px;top:874px;width:449px;height:1px;background:#666"></div>
<div class="abs" style="left:1262px;top:307px;width:443px;height:24px;background:#4b4b4b;border-left:4px solid #2b8cf0"></div>
<div class="t" style="left:1277px;top:313px;font-size:13.500px;color:#fff">処置入力</div>
<div class="abs" style="left:1262px;top:331px;width:443px;height:29px;background:#f0f0f0"></div>
<div class="dd" style="left:1266px;top:335px;width:110px;height:22px;line-height:20px;padding-left:5px">全処置</div>
<div class="dd" style="left:1381px;top:335px;width:130px;height:22px;line-height:20px;padding-left:5px">チェックあり</div>
<div class="dd" style="left:1516px;top:335px;width:90px;height:22px;line-height:20px;padding-left:5px">指定順</div>
<div class="abs" style="left:1656px;top:335px;width:44px;height:22px;background:#fff;border:1px solid #c4c4c4;font-size:16px;line-height:20px;text-align:center">設定</div>
<div class="abs" style="left:1262px;top:360px;width:443px;height:8px;background:#5e5e5e"></div>
<div class="abs" style="left:1262px;top:368px;width:247px;height:26px;background:#6e6e6e"></div>
<div class="t" style="left:1272px;top:375px;font-size:13px;color:#fff">一括</div>
<div class="abs" style="left:1424px;top:375px;width:12px;height:12px;background:#fff;border:1px solid #444"></div>
<div class="t" style="left:1442px;top:374px;font-size:14px;color:#fff;font-weight:500;text-decoration:underline">薬剤一括</div>
<div class="abs" style="left:1421px;top:389px;width:78px;height:1px;background:#fff"></div>
<div class="abs" style="left:1514px;top:368px;width:191px;height:26px;background:#f0f0f0"></div>
<div class="t" style="left:1524px;top:374.500px;font-size:14px;color:#222">処置</div>
<div class="abs" style="left:1635px;top:369px;width:69px;height:23px;background:#fff;border:1px solid #d0d0d0;border-radius:3px"></div>
<svg class="abs" style="left:1639px;top:372px" width="24" height="18" viewBox="0 0 24 18"><circle cx="9" cy="9" r="8" fill="#e8501a"/><path d="M13 9h-7.500M8.500 5.500l-3.500 3.500 3.500 3.500" fill="none" stroke="#fff" stroke-width="1.800"/><path d="M22.500 3v12" stroke="#ddd" stroke-width="1"/></svg>
<div class="t" style="left:1671px;top:374px;font-size:13.500px;color:#222">戻る</div>
<div class="abs" style="left:1262px;top:394px;width:229px;height:480px;overflow:hidden;background:#fff">
<div class="ll" style="left:0;top:1px;width:229px;padding-left:4px">☆ OAｷｼﾛｶ+浸麻 ☆</div>
<div class="ll" style="left:0;top:37px;width:229px;padding-left:4px"><span class="tri">▲</span> う蝕処置+PCap <span class="tri">▲</span></div>
<div class="ll" style="left:0;top:73px;width:229px;padding-left:4px">★ 修形+imp+BT ★</div>
<div class="ll" style="left:0;top:109px;width:229px;padding-left:4px">★① 充形+光重合(単純) ★</div>
<div class="ll" style="left:0;top:145px;width:229px;padding-left:4px">★② 充形+光重合(複雑) ★</div>
<div class="ll" style="left:0;top:181px;width:229px;padding-left:4px">★③ 充形+光+2窩洞(単･複)</div>
<div class="ll" style="left:0;top:217px;width:229px;padding-left:4px">★⑤ 充形+光+2窩洞(単･複)</div>
<div class="ll" style="left:0;top:253px;width:229px;padding-left:4px">★④ 充形+光+2窩洞(複･複)</div>
<div class="ll" style="left:0;top:289px;width:229px;padding-left:4px">★⑥ 充形+光+2窩洞(複･複)</div>
<div class="ll" style="left:0;top:325px;width:229px;padding-left:4px">◆② KP(複)+imp+BT ◆</div>
<div class="ll" style="left:0;top:361px;width:229px;padding-left:4px">◆① KP(単)+imp+BT ◆</div>
<div class="ll" style="left:0;top:397px;width:229px;padding-left:4px">◇① 生PZ(FCK･前装)+imp</div>
<div class="ll" style="left:0;top:433px;width:229px;padding-left:4px">★① シーラント ★</div>
<div class="ll" style="left:0;top:469px;width:229px;padding-left:4px">★② 充形+光重合(単純) ★</div>
</div>
<div class="abs" style="left:1514px;top:394px;width:173px;height:480px;overflow:hidden;background:#fff">
<div class="ll" style="left:0;top:1px;width:109px;padding-left:5px;border-right:1px solid #f0f0f0">X線(標準型)</div><div class="ll" style="left:109px;top:1px;width:64px;text-align:center;padding-left:5px">48</div>
<div class="ll" style="left:0;top:37px;width:109px;padding-left:5px;border-right:1px solid #f0f0f0">X線(標準型)</div><div class="ll" style="left:109px;top:37px;width:64px;text-align:center;padding-left:5px">38</div>
<div class="ll" style="left:0;top:73px;width:109px;padding-left:5px;border-right:1px solid #f0f0f0">除去</div><div class="ll" style="left:109px;top:73px;width:64px;text-align:center;padding-left:5px">＊</div>
<div class="ll" style="left:0;top:109px;width:109px;padding-left:5px;border-right:1px solid #f0f0f0">除去</div><div class="ll" style="left:109px;top:109px;width:64px;text-align:center;padding-left:5px">20</div>
<div class="ll" style="left:0;top:145px;width:109px;padding-left:5px;border-right:1px solid #f0f0f0">困難な除去</div><div class="ll" style="left:109px;top:145px;width:64px;text-align:center;padding-left:5px">42</div>
<div class="ll" style="left:0;top:181px;width:109px;padding-left:5px;border-right:1px solid #f0f0f0">切断(連結部</div><div class="ll" style="left:109px;top:181px;width:64px;text-align:center;padding-left:5px">42</div>
<div class="ll" style="left:0;top:217px;width:109px;padding-left:5px;border-right:1px solid #f0f0f0">実地指1</div><div class="ll" style="left:109px;top:217px;width:64px;text-align:center;padding-left:5px">80</div>
<div class="ll" style="left:0;top:253px;width:109px;padding-left:5px;border-right:1px solid #f0f0f0">ﾗﾊﾞｰﾀﾞﾑ</div><div class="ll" style="left:109px;top:253px;width:64px;text-align:center;padding-left:5px">0</div>
<div class="ll" style="left:0;top:289px;width:109px;padding-left:5px;border-right:1px solid #f0f0f0">う蝕処置</div><div class="ll" style="left:109px;top:289px;width:64px;text-align:center;padding-left:5px">18</div>
<div class="ll" style="left:0;top:325px;width:109px;padding-left:5px;border-right:1px solid #f0f0f0">間PCap</div><div class="ll" style="left:109px;top:325px;width:64px;text-align:center;padding-left:5px">34</div>
<div class="ll" style="left:0;top:361px;width:109px;padding-left:5px;border-right:1px solid #f0f0f0">酸素吸入</div><div class="ll" style="left:109px;top:361px;width:64px;text-align:center;padding-left:5px">65</div>
<div class="ll" style="left:0;top:397px;width:109px;padding-left:5px;border-right:1px solid #f0f0f0">歯内療法</div><div class="ll" style="left:109px;top:397px;width:64px;text-align:center;padding-left:5px">＊</div>
<div class="ll" style="left:0;top:433px;width:109px;padding-left:5px;border-right:1px solid #f0f0f0">充形</div><div class="ll" style="left:109px;top:433px;width:64px;text-align:center;padding-left:5px">128</div>
<div class="ll" style="left:0;top:469px;width:109px;padding-left:5px;border-right:1px solid #f0f0f0">仮封</div><div class="ll" style="left:109px;top:469px;width:64px;text-align:center;padding-left:5px">＊</div>
</div>
<div class="sb" style="left:1491px;top:394px;width:17px;height:480px"><svg style="top:0" width="17" height="17" viewBox="0 0 17 17"><path d="M4.500 10.500l4-4 4 4" fill="none" stroke="#555" stroke-width="1.600"/></svg><div class="th" style="top:17px;height:311px"></div><svg style="bottom:0" width="17" height="17" viewBox="0 0 17 17"><path d="M4.500 6.500l4 4 4-4" fill="none" stroke="#555" stroke-width="1.600"/></svg></div>
<div class="sb" style="left:1687px;top:394px;width:17px;height:480px"><svg style="top:0" width="17" height="17" viewBox="0 0 17 17"><path d="M4.500 10.500l4-4 4 4" fill="none" stroke="#555" stroke-width="1.600"/></svg><div class="th" style="top:17px;height:155px"></div><svg style="bottom:0" width="17" height="17" viewBox="0 0 17 17"><path d="M4.500 6.500l4 4 4-4" fill="none" stroke="#555" stroke-width="1.600"/></svg></div>
<!-- remote support window -->
<div class="abs" style="left:333px;top:553px;width:482px;height:356px;background:#fff;box-shadow:0 0 0 1px #7d8b98,0 2px 10px rgba(0,0,20,.2)"></div>
<svg class="abs" style="left:337px;top:557px" width="16" height="16" viewBox="0 0 48 48"><rect width="48" height="48" rx="8" fill="#0e6fd8"/><circle cx="24" cy="24" r="17" fill="#fff"/><path d="M9 24 L18 17 L18 21.500 L30 21.500 L30 17 L39 24 L30 31 L30 26.500 L18 26.500 L18 31Z" fill="#1172d6"/></svg>
<div class="t" style="left:358px;top:559px;font-size:12px;color:#111"><span class="nar" style="transform:scaleX(.735)">アキラックス リモートサポート</span></div>
<svg class="abs" style="left:680px;top:553px" width="134" height="25" viewBox="0 0 134 25"><path d="M15.500 12.500h10" stroke="#222" stroke-width="1.200"/><rect x="60.500" y="8.500" width="8" height="8" fill="none" stroke="#c8c8c8" stroke-width="1"/><path d="M106 7.500l10 10M116 7.500l-10 10" stroke="#222" stroke-width="1.200"/></svg>
<div class="abs" style="left:333px;top:578px;width:482px;height:1.500px;background:#2a9d8f"></div>
<!-- logo -->
<svg class="abs" style="left:350px;top:597px" width="58" height="52" viewBox="0 0 58 52"><path d="M28 4.500 C20 13 11 27 5.500 43 C20 40 36 42 52 46 C47 30 38 15 28 4.500Z" fill="none" stroke="#2a9f98" stroke-width="3" stroke-linejoin="round"/><path d="M4.500 37 C16 32 30 38 52.500 39 L54 47.500 C36 44 18 42 3 48.500Z" fill="#2fa59c"/><path d="M5 38.500 C18 33 34 40 53 40.500" fill="none" stroke="#fff" stroke-width="1.300"/></svg>
<div class="t" style="left:413px;top:595px;font-size:40px;font-weight:bold;color:#0a0a0a;letter-spacing:-.5px;-webkit-text-stroke:1.600px #0a0a0a"><span class="nar" style="transform:scaleX(.875)">AQUILAX</span></div>
<div class="t" style="left:413.500px;top:635px;font-size:11.500px;font-weight:500;color:#111;letter-spacing:-.65px">アキラックス リモートサポート</div>
<div class="abs" style="left:333px;top:662px;width:482px;height:17px;background:#12998a"></div>
<div class="t" style="left:793px;top:665px;font-size:11px;color:#fff">4.0</div>
<div class="abs" style="left:333px;top:679px;width:482px;height:33px;background:#eaebec;border-bottom:1px solid #d4d6d8"></div>
<div class="t" style="left:346px;top:687px;font-size:16px;color:#555">遠隔操作を受ける許可</div>
<svg class="abs" style="left:787px;top:686px" width="18" height="18" viewBox="0 0 20 20"><g fill="#444"><circle cx="10" cy="10" r="6"/><g id="gt2"><rect x="8.300" y=".8" width="3.400" height="4" rx=".6"/><rect x="8.300" y="15.200" width="3.400" height="4" rx=".6"/></g><use href="#gt2" transform="rotate(45 10 10)"/><use href="#gt2" transform="rotate(90 10 10)"/><use href="#gt2" transform="rotate(135 10 10)"/></g><circle cx="10" cy="10" r="2.600" fill="#eaebec"/></svg>
<div class="t" style="left:345px;top:725px;font-size:12px;color:#555"><span class="nar" style="transform:scaleX(.9)">常駐型リモートサポート</span></div>
<div class="abs" style="left:567px;top:728px;width:2px;height:46px;background:#666"></div>
<div class="t" style="left:581px;top:725px;font-size:14.500px;font-weight:bold;color:#3a3a3a;letter-spacing:0">使用中のID</div>
<div class="t" style="left:580px;top:747px;font-size:24px;color:#5a5a5a;letter-spacing:-2.300px;word-spacing:7px;font-weight:400">＊＊＊ ＊＊＊ ＊＊＊</div>
<div class="abs" style="left:345px;top:814px;width:80px;height:31px;background:#fff;border:1px solid #555;border-radius:2px;font-size:13px;font-weight:bold;line-height:30px;text-align:center;color:#222">OK</div>
<div class="t" style="left:345px;top:852px;font-size:11.500px;color:#444;text-decoration:underline;letter-spacing:.15px">www.teamviewer.com</div>
<div class="abs" style="left:333px;top:874px;width:482px;height:35px;background:#fafafa;border-top:1px solid #e2e2e2"></div>
<div class="abs" style="left:343px;top:885px;width:10px;height:10px;border-radius:50%;background:#3dc24a"></div>
<div class="t" style="left:360px;top:884px;font-size:12px;color:#444;letter-spacing:.8px">接続準備完了（安全な接続）</div>
<!-- taskbar -->
<div class="abs" style="left:0;top:1040px;width:1920px;height:40px;background:linear-gradient(to right,#15303d 0%,#172c40 40%,#172648 75%,#17224d 100%)"></div>
<div class="abs" style="left:48px;top:1041px;width:343px;height:39px;background:#f2f2f2"></div>
<svg class="abs" style="left:0;top:1040px" width="48" height="40" viewBox="0 0 48 40"><g fill="#fff"><path d="M16 14.300 L22.600 13.400 L22.600 19.600 L16 19.600Z"/><path d="M23.400 13.300 L32 12 L32 19.600 L23.400 19.600Z"/><path d="M16 20.400 L22.600 20.400 L22.600 26.600 L16 25.700Z"/><path d="M23.400 20.400 L32 20.400 L32 28 L23.400 26.700Z"/></g></svg>
<svg class="abs" style="left:58px;top:1050px" width="20" height="20" viewBox="0 0 20 20"><circle cx="12" cy="8" r="5.300" fill="none" stroke="#333" stroke-width="1.400"/><path d="M8.200 11.800 L2.500 17.500" stroke="#333" stroke-width="1.500"/></svg>
<div class="abs" style="left:88px;top:1050px;font-size:14.500px;line-height:20px;color:#3a3a3a;white-space:nowrap;transform:scaleX(.86);transform-origin:0 50%">ここに入力して検索</div>
<!-- cortana -->
<svg class="abs" style="left:404px;top:1048px" width="24" height="24" viewBox="0 0 24 24"><circle cx="12" cy="12" r="7" fill="none" stroke="#fff" stroke-width="2"/></svg>
<!-- task view -->
<svg class="abs" style="left:452px;top:1048px" width="24" height="24" viewBox="0 0 24 24"><g fill="none" stroke="#fff" stroke-width="1.300"><rect x="4.500" y="6.500" width="9" height="11"/><path d="M16.500 6.500h3M16.500 17.500h3M18 6v12"/><path d="M3 4.500h2M12 4.500h2M3 19.500h2M12 19.500h2" /></g></svg>
<!-- edge -->
<svg class="abs" style="left:500px;top:1046px" width="28" height="28" viewBox="0 0 28 28"><text x="14" y="24" text-anchor="middle" font-family="Liberation Sans,sans-serif" font-weight="bold" font-size="29" fill="#1c86e0">e</text><path d="M4 13 C6 6 14 2 21 6" fill="none" stroke="#1c86e0" stroke-width="3"/></svg>
<!-- explorer -->
<svg class="abs" style="left:550px;top:1047px" width="28" height="26" viewBox="0 0 28 26"><path d="M2 5 L2 3 Q2 2 3 2 L10 2 L12 4 L25 4 Q26 4 26 5 L26 8 L2 8Z" fill="#e8b53a"/><rect x="2" y="7" width="24" height="16" fill="#f7d268"/><rect x="2" y="7" width="24" height="3" fill="#fbe39a"/><path d="M8 23 L8 15 L20 15 L20 23 L17 23 L17 18 L11 18 L11 23Z" fill="#3e8ede"/></svg>
<!-- store -->
<svg class="abs" style="left:599px;top:1045px" width="26" height="30" viewBox="0 0 26 30"><path d="M8.500 9 C8.500 1 17.500 1 17.500 9" fill="none" stroke="#e8e8e8" stroke-width="1.600"/><path d="M2 8 L24 8 L23 27 L3 27Z" fill="#f4f4f4"/><rect x="7.500" y="12" width="5" height="5" fill="#f25022"/><rect x="13.500" y="12" width="5" height="5" fill="#7fba00"/><rect x="7.500" y="18" width="5" height="5" fill="#00a4ef"/><rect x="13.500" y="18" width="5" height="5" fill="#ffb900"/></svg>
<!-- aquilax x task -->
<div class="abs" style="left:642px;top:1078px;width:41px;height:2px;background:#86b9e6"></div>
<svg class="abs" style="left:650px;top:1048px" width="24" height="24" viewBox="0 0 48 48"><rect width="48" height="48" fill="#fff"/><text x="24" y="45" font-family="Liberation Serif,serif" font-size="60" fill="#d3197f" text-anchor="middle" transform="translate(24 0) scale(.82 1) translate(-24 0)">X</text><rect x="1" y="16" width="46" height="13" rx="6.500" fill="#17247e"/><text x="24" y="26.500" font-family="Liberation Sans,sans-serif" font-weight="bold" font-size="9.500" fill="#fff" text-anchor="middle">AQUILAX</text></svg>
<!-- teamviewer task active -->
<div class="abs" style="left:687px;top:1040px;width:48px;height:40px;background:#46586a"></div>
<div class="abs" style="left:687px;top:1078px;width:48px;height:2px;background:#8fc0ea"></div>
<svg class="abs" style="left:699px;top:1048px" width="24" height="24" viewBox="0 0 48 48"><rect width="48" height="48" rx="7" fill="#0e6fd8"/><circle cx="24" cy="24" r="18" fill="#fff"/><path d="M8 24 L18 16.500 L18 21.500 L30 21.500 L30 16.500 L40 24 L30 31.500 L30 26.500 L18 26.500 L18 31.500Z" fill="#1172d6"/></svg>
<!-- tray -->
<svg class="abs" style="left:1706px;top:1052px" width="16" height="16" viewBox="0 0 16 16"><path d="M2.500 10.500 L8 5 L13.500 10.500" fill="none" stroke="#fff" stroke-width="1.300"/></svg>
<svg class="abs" style="left:1729px;top:1051px" width="20" height="18" viewBox="0 0 20 18"><g fill="none" stroke="#fff" stroke-width="1.100"><rect x="4.500" y="3.500" width="13" height="9"/><path d="M8 16.500h6M11 12.500v4"/><rect x="1.500" y="1.500" width="4" height="3.500" fill="#17264a"/><path d="M3.500 5v11.500h3"/></g></svg>
<svg class="abs" style="left:1753px;top:1051px" width="20" height="18" viewBox="0 0 20 18"><g fill="none" stroke="#fff" stroke-width="1.100"><path d="M2.500 6.500h3l4 -3.500v12l-4 -3.500h-3z"/><path d="M11.500 6.500q1.500 2.500 0 5"/><path d="M13.500 4.500q3 4.500 0 9" stroke-opacity=".7"/><path d="M15.500 2.500q4.500 6.500 0 13" stroke-opacity=".45"/></g></svg>
<div class="abs" style="left:1777px;top:1049px;width:18px;text-align:center;font-size:20px;line-height:22px;color:#fff;font-weight:300">A</div>
<div class="abs" style="left:1797px;top:1044px;width:70px;text-align:center;font-size:11.500px;line-height:15px;color:#fff;letter-spacing:-.2px">18:57</div>
<div class="abs" style="left:1797px;top:1061px;width:70px;text-align:center;font-size:11.500px;line-height:15px;color:#fff;letter-spacing:-.2px">2020/05/12</div>
<svg class="abs" style="left:1877px;top:1050px" width="28" height="24" viewBox="0 0 28 24"><path d="M2 2h16v12h-12l-4 4z" fill="#fff"/><path d="M5 5.500h10M5 8h10M5 10.500h10" stroke="#17244c" stroke-width="1"/><circle cx="18" cy="15" r="6.500" fill="#2a3142" stroke="#c9ced6" stroke-width="1"/><text x="18" y="18.800" text-anchor="middle" font-family="Liberation Sans,sans-serif" font-weight="bold" font-size="10" fill="#fff">3</text></svg>
<div class="abs" style="left:1914px;top:1040px;width:1px;height:40px;background:#7a8494"></div>

</body></html>
